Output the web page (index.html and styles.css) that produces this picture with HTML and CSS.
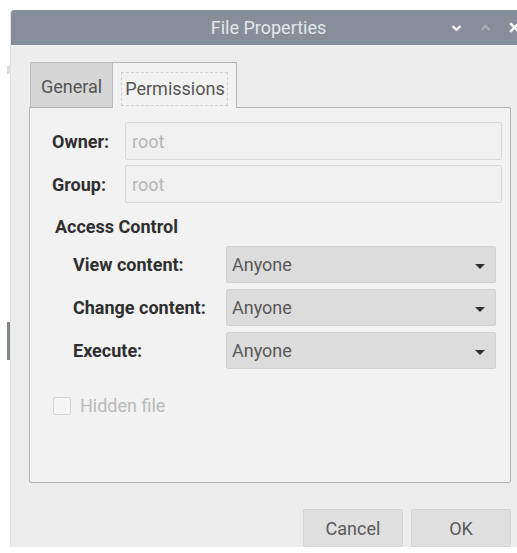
FILE: index.html
```html
<!DOCTYPE html>
<html lang="en">
<head>
<meta charset="utf-8">
<title>File Properties</title>
<link rel="stylesheet" href="styles.css">
</head>
<body>
<div class="desk">
  <div class="desk-edge"><span class="edge-mark top"></span><span class="edge-mark side"></span></div>
  <div class="window">
    <header class="titlebar">
      <span class="spacer"></span>
      <span class="title">File Properties</span>
      <span class="controls">
        <svg class="ctl" width="11" height="8" viewBox="0 0 11 8"><path d="M1.5 2 L5.5 5.8 L9.5 2" fill="none" stroke="#f2f3f4" stroke-width="2.4"/></svg>
        <svg class="ctl up" width="11" height="8" viewBox="0 0 11 8"><path d="M1.5 6 L5.5 2.2 L9.5 6" fill="none" stroke="#a9b0b7" stroke-width="2.4"/></svg>
        <svg class="ctl close" width="11" height="11" viewBox="0 0 11 11"><path d="M1.2 1.2 L9.8 9.8 M9.8 1.2 L1.2 9.8" fill="none" stroke="#f4f5f6" stroke-width="2.6"/></svg>
      </span>
    </header>
    <main class="content">
      <div class="notebook">
        <div class="tabs">
          <div class="tab">General</div>
          <div class="tab active"><span class="focus">Permissions</span></div>
        </div>
        <section class="page">
          <div class="owner-grid">
            <label class="lbl">Owner:</label>
            <div class="entry">root</div>
            <label class="lbl">Group:</label>
            <div class="entry">root</div>
          </div>
          <div class="heading">Access Control</div>
          <div class="access-grid">
            <label class="lbl">View content:</label>
            <div class="combo"><span>Anyone</span><i class="arrow"></i></div>
            <label class="lbl">Change content:</label>
            <div class="combo"><span>Anyone</span><i class="arrow"></i></div>
            <label class="lbl">Execute:</label>
            <div class="combo"><span>Anyone</span><i class="arrow"></i></div>
          </div>
          <div class="check-row">
            <span class="check"></span>
            <span class="check-text">Hidden file</span>
          </div>
        </section>
      </div>
      <footer class="buttons">
        <button class="btn">Cancel</button>
        <button class="btn">OK</button>
      </footer>
    </main>
  </div>
</div>
</body>
</html>
```

FILE: styles.css
```css
* { box-sizing: border-box; }

html, body {
  margin: 0;
  padding: 0;
  background: #ffffff;
  overflow: hidden;
  width: 517px;
  height: 553px;
}

body {
  font-family: Roboto, "Liberation Sans", sans-serif;
  font-size: 18px;
}

.desk {
  display: flex;
  padding-top: 10px;
}

/* sliver of the desktop behind the dialog */
.desk-edge {
  width: 11px;
  display: flex;
  flex-direction: column;
  padding-left: 7px;
}
.edge-mark {
  display: block;
  width: 3px;
  background: #dcdcdc;
}
.edge-mark.top {
  height: 8px;
  margin-top: 56px;
}
.edge-mark.side {
  height: 38px;
  margin-top: 248px;
  background: #7f858b;
}

.window {
  width: 518px;
  flex: none;
  background: #ededed;
  border-left: 1px solid #e2e2e2;
  border-top-left-radius: 4px;
  overflow: hidden;
  display: flex;
  flex-direction: column;
}

.titlebar {
  height: 35px;
  background: #868f99;
  display: grid;
  grid-template-columns: 1fr auto 1fr;
  align-items: center;
}
.title {
  color: #e4e7ea;
  font-size: 18px;
  padding-right: 2px;
}
.controls {
  display: flex;
  justify-content: flex-end;
  align-items: center;
  gap: 18px;
  padding-right: 8px;
}
.ctl { display: block; }

.content {
  padding: 17px 17px 0 18px;
  display: flex;
  flex-direction: column;
}

.notebook {
  display: flex;
  flex-direction: column;
}

.tabs {
  display: flex;
  height: 45px;
  padding-left: 1px;
}
.tab {
  width: 83px;
  background: #d6d6d6;
  border: 1px solid #bdbdbd;
  border-bottom: none;
  color: #545454;
  display: flex;
  align-items: center;
  justify-content: center;
  padding-top: 3px;
}
.tab.active {
  width: 124px;
  background: #f2f2f2;
  border-color: #b5b5b5;
  border-left: none;
  margin-bottom: -1px;
  height: 46px;
  position: relative;
  z-index: 1;
}
.focus {
  border: 1px dashed #cfcfcf;
  padding: 5px 2px 6px 3px;
  margin-top: 3px;
  color: #555;
}

.page {
  height: 376px;
  background: #f2f2f2;
  border: 1px solid #b3b3b3;
  border-radius: 0 2px 2px 2px;
  padding: 14px 8px 0 22px;
  display: flex;
  flex-direction: column;
}

.lbl {
  font-weight: 700;
  color: #2f2f2f;
}

.owner-grid {
  display: grid;
  grid-template-columns: 73px 1fr;
  row-gap: 5px;
  align-items: center;
}
.owner-grid .lbl { padding-top: 1px; }
.entry {
  height: 38px;
  border: 1px solid #d9d9d9;
  background: #f0f0f0;
  border-radius: 2px;
  color: #b7b7b7;
  display: flex;
  align-items: center;
  padding-left: 6px;
}

.heading {
  font-weight: 700;
  color: #2f2f2f;
  margin: 12px 0 0 3px;
  line-height: 24px;
}

.access-grid {
  display: grid;
  grid-template-columns: 153px 1fr;
  row-gap: 6px;
  align-items: center;
  margin: 7px 6px 0 21px;
}
.combo {
  height: 37px;
  background: #dcdcdc;
  border: 1px solid #d2d2d2;
  border-radius: 2px;
  display: flex;
  align-items: center;
  justify-content: space-between;
  padding: 0 10px 0 5px;
  color: #585858;
}
.arrow {
  width: 0;
  height: 0;
  border-left: 5px solid transparent;
  border-right: 5px solid transparent;
  border-top: 5px solid #2e2e2e;
  margin-top: 3px;
}

.check-row {
  display: flex;
  align-items: center;
  gap: 9px;
  margin: 26px 0 0 1px;
}
.check {
  width: 18px;
  height: 18px;
  border: 1px solid #d3d3d3;
  border-radius: 2px;
  background: #f5f5f5;
}
.check-text {
  color: #b9b9b9;
}

.buttons {
  display: flex;
  justify-content: flex-end;
  gap: 8px;
  margin-top: 26px;
  padding-right: 0;
}
.btn {
  width: 100px;
  height: 38px;
  font: inherit;
  color: #5a5a5a;
  background: #e0e0e0;
  border: 1px solid #d4d4d4;
  border-radius: 2px;
}
```
